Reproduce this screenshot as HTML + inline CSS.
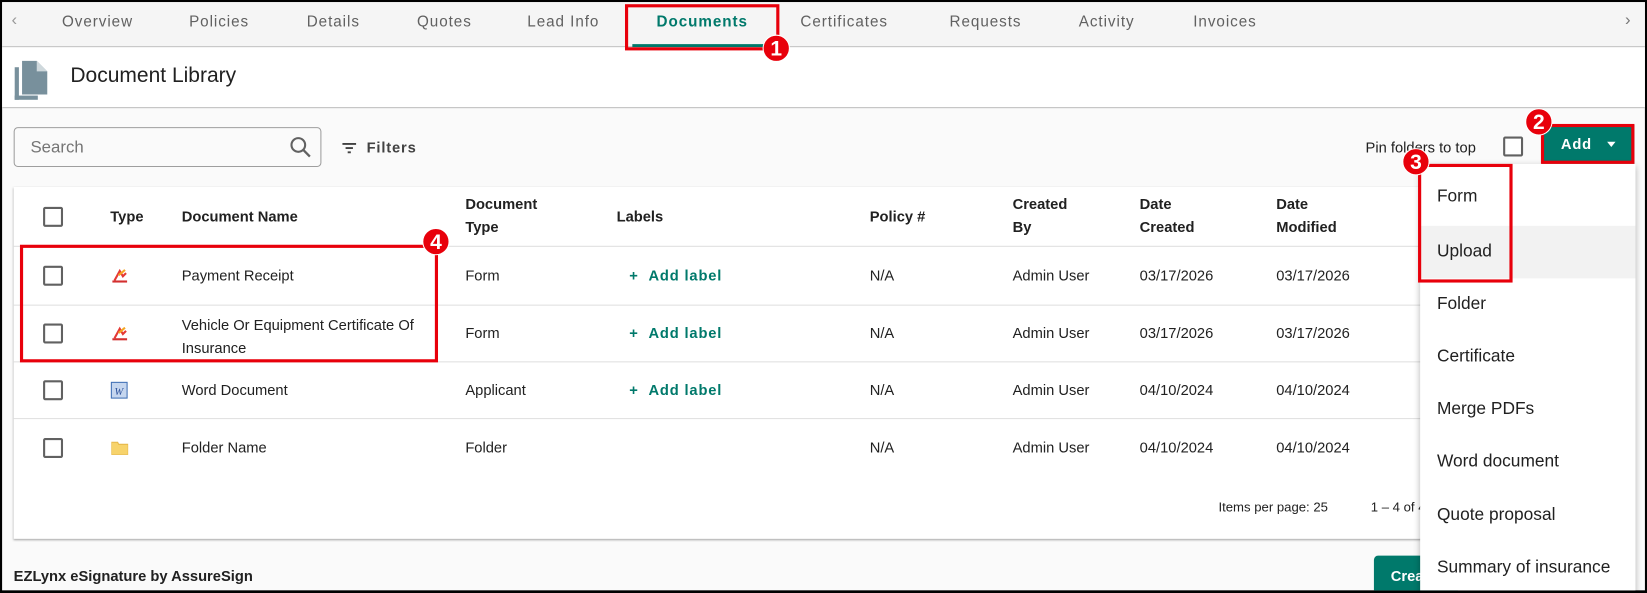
<!DOCTYPE html>
<html><head><meta charset="utf-8"><style>
*{box-sizing:border-box;margin:0;padding:0}
html,body{width:1647px;height:593px;overflow:hidden}
body{font-family:"Liberation Sans",sans-serif;background:#000;position:relative}
.wrap{position:absolute;left:0;top:0;width:1568px;height:564px;transform:scale(1.0504);transform-origin:0 0;background:#000;overflow:hidden}
.frame{position:absolute;left:2px;top:2px;width:1564px;height:560px;background:#fafafa;overflow:hidden}
.abs{position:absolute}
.tabs{left:0;top:0;width:1564px;height:43px;background:#f5f5f5;border-bottom:1px solid #bdbdbd}
.tab{position:absolute;top:11px;font-size:14.5px;color:#616161;letter-spacing:.9px;font-weight:500}
.hdr{left:0;top:43px;width:1564px;height:58px;background:#fff;border-bottom:1px solid #bdbdbd}
.t{position:absolute;font-size:14px;color:#212121}
.th{position:absolute;font-size:14px;color:#212121;font-weight:bold;line-height:22px}
.cb{position:absolute;width:19px;height:19px;border:2px solid #616161;border-radius:2px;background:#fff}
.line{position:absolute;left:11px;width:1340px;height:1px;background:#e0e0e0}
.lbl{position:absolute;font-size:14px;color:#00796b;font-weight:bold;letter-spacing:.8px}
.red{position:absolute;border:3px solid #e8000b}
.badge{position:absolute;width:26px;height:26px;border-radius:50%;background:#e8000b;color:#fff;font-weight:bold;font-size:20px;text-align:center;line-height:27px;border:1px solid #fff}
.mi{position:absolute;left:1366px;font-size:16.5px;color:#212121}
</style></head><body><div class="wrap"><div class="frame">
<div class="abs tabs">
<div class="tab" style="left:9px;color:#999;font-size:16px;top:9px">‹</div>
<div class="tab" style="left:57px">Overview</div>
<div class="tab" style="left:178px">Policies</div>
<div class="tab" style="left:290px">Details</div>
<div class="tab" style="left:395px">Quotes</div>
<div class="tab" style="left:500px">Lead Info</div>
<div class="tab" style="left:623px;color:#00796b;font-weight:bold">Documents</div>
<div class="abs" style="left:600px;top:40px;width:135px;height:3px;background:#00796b"></div>
<div class="tab" style="left:760px">Certificates</div>
<div class="tab" style="left:902px">Requests</div>
<div class="tab" style="left:1025px">Activity</div>
<div class="tab" style="left:1134px">Invoices</div>
<div class="tab" style="left:1545px;color:#777;font-size:16px;top:9px">›</div>
</div>
<div class="abs hdr">
<svg class="abs" style="left:10px;top:11px" width="36" height="40" viewBox="0 0 36 40"><rect x="2" y="8" width="4" height="31" fill="#78909c"/><rect x="2" y="35" width="22" height="4" fill="#78909c"/><path d="M9 2h14l10 10v22H9z" fill="#78909c"/><path d="M23 2v10h10" fill="#cfd8dc"/></svg>
<div class="t" style="left:65px;top:16px;font-size:20px;color:#212121">Document Library</div>
</div>
<div class="abs" style="left:11px;top:119px;width:293px;height:38px;border:1px solid #9e9e9e;border-radius:4px;background:#fafafa"></div>
<div class="t" style="left:27px;top:130px;font-size:16px;color:#757575">Search</div>
<svg class="abs" style="left:273px;top:127px" width="22" height="22" viewBox="0 0 22 22"><circle cx="9" cy="9" r="6.5" fill="none" stroke="#616161" stroke-width="2"/><path d="M14 14l6 6" stroke="#616161" stroke-width="2.2"/></svg>
<svg class="abs" style="left:323px;top:133px" width="16" height="12"><path d="M1 2h13M4 6h7M6 10h3" stroke="#424242" stroke-width="1.8"/></svg>
<div class="t" style="left:347px;top:130px;font-weight:bold;letter-spacing:.8px;color:#424242">Filters</div>
<div class="t" style="left:1298px;top:130px">Pin folders to top</div>
<div class="cb" style="left:1429px;top:128px"></div>
<div class="abs" style="left:1466px;top:117px;width:88px;height:37px;background:#00796b"></div>
<div class="t" style="left:1484px;top:127px;color:#fff;font-weight:bold;letter-spacing:.8px">Add</div>
<div class="abs" style="left:1528px;top:133px;border:4.5px solid transparent;border-top:5px solid #fff"></div>
<div class="abs" style="left:11px;top:176px;width:1540px;height:335px;background:#fff;box-shadow:0 1px 2px rgba(0,0,0,.35)"></div>
<div class="cb" style="left:39px;top:195px"></div>
<div class="th" style="left:103px;top:193px">Type</div>
<div class="th" style="left:171px;top:193px">Document Name</div>
<div class="th" style="left:441px;top:181px">Document<br>Type</div>
<div class="th" style="left:585px;top:193px">Labels</div>
<div class="th" style="left:826px;top:193px">Policy #</div>
<div class="th" style="left:962px;top:181px">Created<br>By</div>
<div class="th" style="left:1083px;top:181px">Date<br>Created</div>
<div class="th" style="left:1213px;top:181px">Date<br>Modified</div>
<div class="line" style="top:232px"></div><div class="line" style="top:288px"></div><div class="line" style="top:342px"></div><div class="line" style="top:396px"></div>
<div class="cb" style="left:39px;top:251px"></div>
<svg class="abs" style="left:104px;top:252px" width="16" height="16"><path d="M3 13L8 4l3 5 3-3" fill="none" stroke="#e53935" stroke-width="2"/><path d="M7 8l6-5" stroke="#f5a623" stroke-width="2"/><rect x="1" y="13" width="14" height="2" fill="#d32f2f"/></svg>
<div class="t" style="left:171px;top:252px">Payment Receipt</div>
<div class="t" style="left:441px;top:252px">Form</div>
<div class="lbl" style="left:597px;top:252px">+&nbsp;&nbsp;Add label</div>
<div class="t" style="left:826px;top:252px">N/A</div><div class="t" style="left:962px;top:252px">Admin User</div>
<div class="t" style="left:1083px;top:252px">03/17/2026</div><div class="t" style="left:1213px;top:252px">03/17/2026</div>
<div class="cb" style="left:39px;top:306px"></div>
<svg class="abs" style="left:104px;top:307px" width="16" height="16"><path d="M3 13L8 4l3 5 3-3" fill="none" stroke="#e53935" stroke-width="2"/><path d="M7 8l6-5" stroke="#f5a623" stroke-width="2"/><rect x="1" y="13" width="14" height="2" fill="#d32f2f"/></svg>
<div class="t" style="left:171px;top:296px;line-height:22px">Vehicle Or Equipment Certificate Of<br>Insurance</div>
<div class="t" style="left:441px;top:307px">Form</div>
<div class="lbl" style="left:597px;top:307px">+&nbsp;&nbsp;Add label</div>
<div class="t" style="left:826px;top:307px">N/A</div><div class="t" style="left:962px;top:307px">Admin User</div>
<div class="t" style="left:1083px;top:307px">03/17/2026</div><div class="t" style="left:1213px;top:307px">03/17/2026</div>
<div class="cb" style="left:39px;top:360px"></div>
<svg class="abs" style="left:103px;top:361px" width="17" height="17"><rect x="1" y="1" width="15" height="15" fill="#c5d6ef" stroke="#3f6fb5"/><text x="4" y="13" font-size="10" font-style="italic" fill="#2a4f9a" font-family="Liberation Serif">W</text></svg>
<div class="t" style="left:171px;top:361px">Word Document</div>
<div class="t" style="left:441px;top:361px">Applicant</div>
<div class="lbl" style="left:597px;top:361px">+&nbsp;&nbsp;Add label</div>
<div class="t" style="left:826px;top:361px">N/A</div><div class="t" style="left:962px;top:361px">Admin User</div>
<div class="t" style="left:1083px;top:361px">04/10/2024</div><div class="t" style="left:1213px;top:361px">04/10/2024</div>
<div class="cb" style="left:39px;top:415px"></div>
<svg class="abs" style="left:104px;top:418px" width="16" height="13"><path d="M0 1h6l1 2h9v10H0z" fill="#f7d36b" stroke="#e6b84a"/></svg>
<div class="t" style="left:171px;top:416px">Folder Name</div>
<div class="t" style="left:441px;top:416px">Folder</div>
<div class="t" style="left:826px;top:416px">N/A</div><div class="t" style="left:962px;top:416px">Admin User</div>
<div class="t" style="left:1083px;top:416px">04/10/2024</div><div class="t" style="left:1213px;top:416px">04/10/2024</div>
<div class="t" style="left:1158px;top:474px;font-size:12.5px">Items per page: 25</div>
<div class="t" style="left:1303px;top:474px;font-size:12.5px">1 – 4 of 4</div>
<div class="t" style="left:11px;top:538px;font-weight:bold;font-size:14px">EZLynx eSignature by AssureSign</div>
<div class="abs" style="left:1306px;top:527px;width:80px;height:40px;background:#00796b;border-radius:4px"></div>
<div class="t" style="left:1322px;top:538px;color:#fff;font-weight:bold">Create</div>
<div class="abs" style="left:1350px;top:154px;width:205px;height:420px;background:#fff;box-shadow:0 2px 6px rgba(0,0,0,.3)"></div>
<div class="abs" style="left:1350px;top:213px;width:205px;height:50px;background:#f2f2f2"></div>
<div class="mi" style="top:176px">Form</div>
<div class="mi" style="top:228px">Upload</div>
<div class="mi" style="top:278px">Folder</div>
<div class="mi" style="top:328px">Certificate</div>
<div class="mi" style="top:378px">Merge PDFs</div>
<div class="mi" style="top:428px">Word document</div>
<div class="mi" style="top:479px">Quote proposal</div>
<div class="mi" style="top:529px">Summary of insurance</div>
<div class="red" style="left:593px;top:2px;width:147px;height:44px"></div>
<div class="badge" style="left:724px;top:31px">1</div>
<div class="red" style="left:1465px;top:116px;width:89px;height:38px"></div>
<div class="badge" style="left:1450px;top:101px">2</div>
<div class="red" style="left:1348px;top:154px;width:90px;height:113px"></div>
<div class="badge" style="left:1333px;top:139px">3</div>
<div class="red" style="left:17px;top:231px;width:398px;height:112px"></div>
<div class="badge" style="left:400px;top:215px">4</div>
</div></div></body></html>
